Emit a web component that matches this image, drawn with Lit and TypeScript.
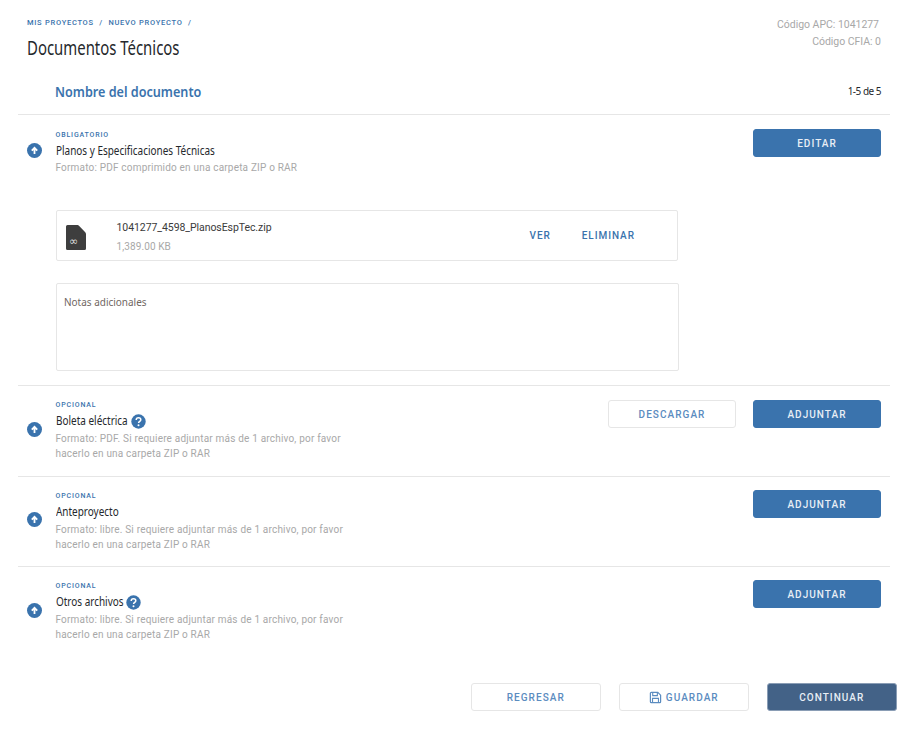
import { LitElement, html, css, svg } from "lit";
import { customElement } from "lit/decorators.js";

const upIcon = html`<svg class="up" viewBox="0 0 15 15" width="15" height="15"><circle cx="7.500" cy="7.500" r="7.500" fill="#3a73ad"/><path d="M7.500 11V5.500M4.800 7.600 7.500 4.800l2.700 2.800" fill="none" stroke="#fff" stroke-width="1.800"/></svg>`;
const helpIcon = html`<svg class="help" viewBox="0 0 15 15" width="15" height="15"><circle cx="7.500" cy="7.500" r="7.200" fill="#3a73ad"/><path d="M5.200 5.900c0-1.400 1-2.200 2.300-2.200s2.300.8 2.300 2c0 1.700-2.200 1.600-2.200 3.300" fill="none" stroke="#fff" stroke-width="1.500"/><circle cx="7.500" cy="11.200" r="1" fill="#fff"/></svg>`;
const saveIcon = svg`<path d="M1.500 2.500a1 1 0 0 1 1-1h7l3 3v7a1 1 0 0 1-1 1h-9a1 1 0 0 1-1-1z" fill="none" stroke="#5b8cc0" stroke-width="1.300"/><path d="M4 2v3h5V2M3.800 12V8h6.400v4" fill="none" stroke="#5b8cc0" stroke-width="1.200"/>`;

@customElement("app-root")
export class AppRoot extends LitElement {
  static styles = css`
    :host { display: block; width: 921px; height: 735px; background: #fff; font-family: Roboto, sans-serif; overflow: hidden; }
    .page { display: flex; flex-direction: column; padding: 18px 31px 0 18px; box-sizing: border-box; height: 735px; width: 921px; }
    .top { display: flex; justify-content: space-between; padding: 0 9px 0 9px; height: 50px; }
    .crumbs { font-size: 7.500px; font-weight: 500; letter-spacing: .72px; color: #3a73ad; line-height: 9px; display: flex; gap: 5.500px; }
    h1 { margin: 10px 0 0; font: 400 19px/22px "Noto Sans", sans-serif; color: #25282c; transform: scaleX(.785); transform-origin: left; white-space: nowrap; }
    .codes { font-size: 10.500px; line-height: 17px; color: #a8a8a8; text-align: right; letter-spacing: -.03px; margin-top: -2px; }
    .codes div:first-child { padding-right: 2px; }
    .thead { display: flex; justify-content: space-between; align-items: center; height: 46px; padding: 0 9px 0 37px; border-bottom: 1px solid #e6e6e6; }
    .thead b { font: 600 14.500px/20px "Noto Sans", sans-serif; color: #3a73ad; transform: scaleX(.87); transform-origin: left; white-space: nowrap; }
    .thead span { font: 400 10px/14px "Noto Sans", sans-serif; letter-spacing: -.5px; color: #25282c; }
    .row { border-bottom: 1px solid #e6e6e6; display: grid; grid-template-columns: 37.500px 1fr auto; padding-right: 9px; box-sizing: border-box; align-content: start; }
    .row.h90 { height: 90.500px; padding-top: 15px; }
    .row.last { border: 0; }
    .ic { display: flex; align-items: center; padding: 0 0 0 9px; height: 56px; }
    .first .ic { height: 40px; }
    .up { display: block; }
    .tag { font-size: 7px; font-weight: 500; letter-spacing: .85px; line-height: 9px; color: #3a73ad; }
    .first .tag { padding-top: 1px; }
    .name { font: 400 12px/16px "Noto Sans", sans-serif; color: #25282c; margin-top: 3px; display: flex; align-items: center; height: 16px; white-space: nowrap; }
    .name span { display: inline-block; transform: scaleX(.83); transform-origin: left; }
    .help { margin-left: -11.300px; }
    .hint { font-size: 10px; line-height: 15px; letter-spacing: .19px; color: #a8a8a8; margin-top: 2px; width: 300px; }
    .first .hint { margin-top: 1px; }
    .btns { display: flex; gap: 17px; align-items: flex-start; margin-top: -1px; }
    .row.h90 + .row.h90 .btns { margin-top: -2px; }
    .btn { box-sizing: border-box; width: 128px; height: 28px; border-radius: 3px; font: 500 10px/27.500px Roboto, sans-serif; letter-spacing: 1.050px; text-align: center; }
    .solid { background: #3a73ad; color: #e8eef5; border: 1px solid #3a73ad; }
    .ghost { background: #fff; color: #5b8cc0; border: 1px solid #e6e6e6; }
    .file { grid-column: 2 / 4; box-sizing: border-box; width: 622px; height: 51px; margin-top: 35px; border: 1px solid #e6e6e6; border-radius: 2px; display: grid; grid-template-columns: 60px 413px auto 1fr; align-items: center; }
    .doc { margin: 4px 0 0 9px; display: block; }
    .fname { font-size: 10.500px; line-height: 14px; letter-spacing: -.07px; color: #3a3a3a; padding-top: 4px; }
    .fsize { font-size: 10px; line-height: 14px; letter-spacing: .1px; color: #a8a8a8; margin-top: 5px; }
    .link { font-size: 10px; font-weight: 500; letter-spacing: .95px; color: #3a73ad; }
    .link.del { margin-left: 31px; }
    .notes { grid-column: 2 / 4; box-sizing: border-box; width: 623px; height: 88px; margin-top: 22px; border: 1px solid #e6e6e6; border-radius: 2px; padding: 10px 7.500px; font: 400 11.500px/16px "Noto Sans", sans-serif; color: #6f665f; }
    .notes span { display: inline-block; transform: scaleX(.867); transform-origin: left; }
    .first { height: 271px; padding-top: 15px; }
    .foot { display: flex; justify-content: flex-end; gap: 17.500px; margin-top: 25px; margin-right: -7px; }
    .foot .btn { width: 130.500px; }
    .foot .dark { background: #436287; border: 1px solid #8a9db5; color: #e8eef5; }
    .save { display: inline-block; vertical-align: -3px; margin-right: 4px; }
  `;

  private item(name: string, help: boolean, h1: string, buttons: unknown, last = false) {
    return html`<div class="row h90 ${last ? "last" : ""}">
      <div class="ic">${upIcon}</div>
      <div>
        <div class="tag">OPCIONAL</div>
        <div class="name"><span>${name}</span>${help ? helpIcon : ""}</div>
        <div class="hint">${h1}<br />hacerlo en una carpeta ZIP o RAR</div>
      </div>
      <div class="btns">${buttons}</div>
    </div>`;
  }

  render() {
    const adj = html`<div class="btn solid">ADJUNTAR</div>`;
    return html`<div class="page">
      <div class="top">
        <div>
          <div class="crumbs"><span>MIS PROYECTOS</span><span>/</span><span>NUEVO PROYECTO</span><span>/</span></div>
          <h1>Documentos Técnicos</h1>
        </div>
        <div class="codes"><div>Código APC: 1041277</div><div>Código CFIA: 0</div></div>
      </div>
      <div class="thead"><b>Nombre del documento</b><span>1-5 de 5</span></div>
      <div class="row first">
        <div class="ic">${upIcon}</div>
        <div>
          <div class="tag">OBLIGATORIO</div>
          <div class="name"><span>Planos y Especificaciones Técnicas</span></div>
          <div class="hint">Formato: PDF comprimido en una carpeta ZIP o RAR</div>
        </div>
        <div class="btns"><div class="btn solid">EDITAR</div></div>
        <div class="file">
          <svg class="doc" viewBox="0 0 20 25" width="20" height="25"><path d="M1.500 0H11c1 0 1.500.3 2.200 1l5.800 6c.7.7 1 1.300 1 2.200v14.300a1.500 1.500 0 0 1-1.500 1.500h-17A1.500 1.500 0 0 1 0 23.500v-22A1.500 1.500 0 0 1 1.500 0z" fill="#3e3e3e"/><text x="3" y="20" font-size="11" fill="#ddd" font-family="DejaVu Sans">∞</text></svg>
          <div><div class="fname">1041277_4598_PlanosEspTec.zip</div><div class="fsize">1,389.00 KB</div></div>
          <span class="link">VER</span><span class="link del">ELIMINAR</span>
        </div>
        <div class="notes"><span>Notas adicionales</span></div>
      </div>
      ${this.item("Boleta eléctrica", true, "Formato: PDF. Si requiere adjuntar más de 1 archivo, por favor", html`<div class="btn ghost">DESCARGAR</div>${adj}`)}
      ${this.item("Anteproyecto", false, "Formato: libre. Si requiere adjuntar más de 1 archivo, por favor", adj)}
      ${this.item("Otros archivos", true, "Formato: libre. Si requiere adjuntar más de 1 archivo, por favor", adj, true)}
      <div class="foot">
        <div class="btn ghost">REGRESAR</div>
        <div class="btn ghost"><svg class="save" viewBox="0 0 14 14" width="13" height="13">${saveIcon}</svg>GUARDAR</div>
        <div class="btn dark">CONTINUAR</div>
      </div>
    </div>`;
  }
}
